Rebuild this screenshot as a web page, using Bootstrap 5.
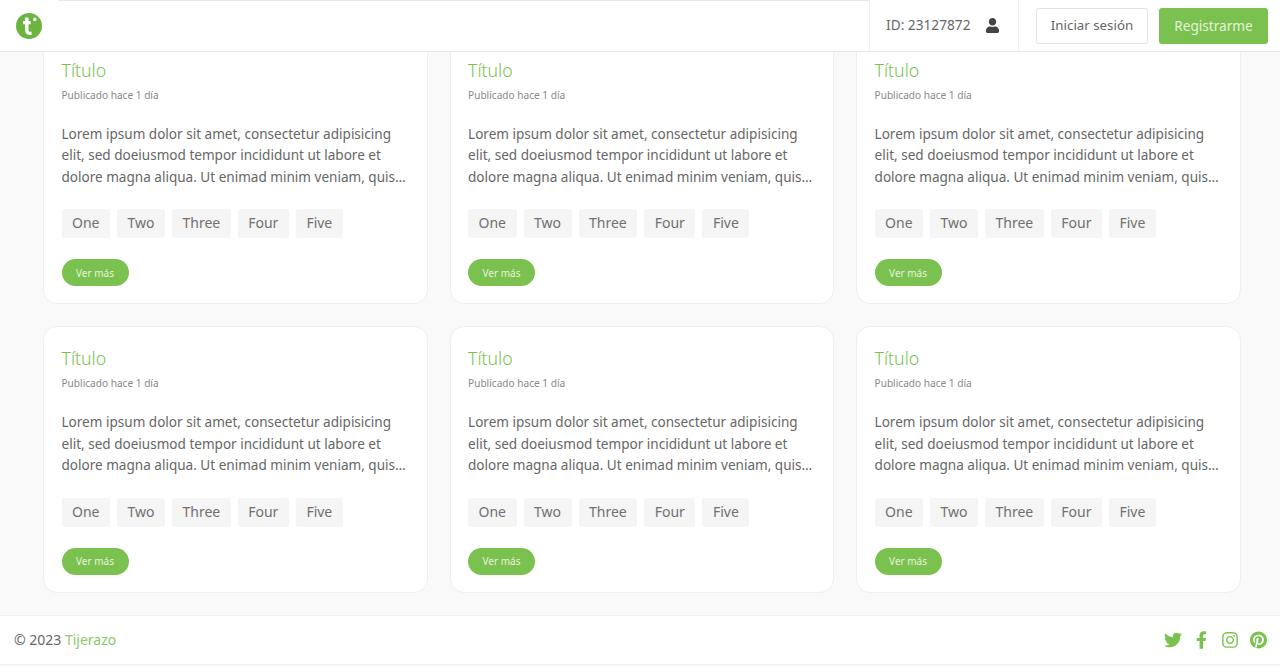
<!DOCTYPE html>
<html lang="es">
<head>
    <meta charset="UTF-8">
    <meta name="viewport" content="width=device-width, initial-scale=1.0">
    <title>Tijerazo</title>
    <link rel="stylesheet" href="https://cdn.jsdelivr.net/npm/bootstrap@5.3.0/dist/css/bootstrap.min.css">
    <style>
        body { background: #f9f9f9; color: #666; font-family: "Noto Sans", "Liberation Sans", sans-serif; font-size: 14px; overflow: hidden; }
        .top-bar { height: 52px; background: #fff; border-bottom: 1px solid #e8e8e8; padding: 0; }
        .logo-cell { width: 58px; height: 51px; }
        .top-fill { border-top: 1px solid #e8e8e8; height: 51px; }
        .id-cell { width: 150px; height: 51px; padding-left: 16px; gap: 15px; border-left: 1px solid #f0f0f0; border-right: 1px solid #f0f0f0; color: #666; font-size: 13.7px; }
        .top-actions { height: 51px; gap: 11px; padding: 0 12px 0 17px; }
        .btn-login { width: 112px; height: 36px; font-size: 13.3px; color: #666; background: #fff; border: 1px solid #e2e2e2; border-radius: 3px; padding: 1px 0 0; }
        .btn-signup { width: 109px; height: 36px; font-size: 13.6px; color: #e6f4dc; background: #7ac14f; border: 0; border-radius: 3px; padding: 1px 0 0; }
        .page-main { padding: 37.7px 39.4px 0 43px; }
        .post-grid { --bs-gutter-x: 22px; --bs-gutter-y: 22px; }
        .post-card { height: 266.6px; border: 1px solid #efefef; border-radius: 14px; padding: 17px 17.5px 0; background: #fff; }
        .post-title { font-size: 17.7px; line-height: 28px; color: #7ac14f; font-weight: 300; margin: 0; }
        .post-date { font-size: 10.1px; line-height: 14px; color: #888; margin: 4px 0 0; }
        .post-text { font-size: 13.55px; line-height: 21.5px; color: #666; margin: 22px 0 0; }
        .tag-row { margin-top: 21px; gap: 7px; }
        .tag-item { height: 29px; line-height: 28px; padding: 0 10.5px; background: #f5f5f5; border-radius: 3px; font-size: 14px; color: #707070; }
        .btn-more { display: block; width: 67px; height: 27px; margin-top: 21px; padding: 1px 0 0; border: 0; border-radius: 14px; font-size: 10px; color: #e6f4dc; background: #7ac14f; }
        .page-foot { height: 50px; margin-top: 22px; padding: 0 13px 0 14px; background: #fff; border-top: 1px solid #efefef; border-bottom: 1px solid #efefef; color: #666; font-size: 14px; }
        .page-foot a { color: #8cc96a; text-decoration: none; }
        .foot-icon { fill: #7ac14f; display: block; }
        .gap-f { margin-left: 14px; }
        .gap-i { margin-left: 15px; }
        .gap-p { margin-left: 12px; }
    </style>
</head>
<body>
    <nav class="top-bar fixed-top d-flex align-items-start">
        <div class="logo-cell d-flex align-items-center justify-content-center">
            <svg width="28" height="28" viewBox="0 0 28 28" aria-label="Tijerazo">
                <circle cx="14" cy="14" r="13" fill="#6db33f"/>
                <path d="M11.8 5.5v12.5c0 2.8 1.6 3.8 4.8 3.2M8 10.6h7.6" fill="none" stroke="#fff" stroke-width="3.4"/>
                <circle cx="19.8" cy="7.4" r="1.8" fill="#fff"/>
            </svg>
        </div>
        <div class="top-fill flex-grow-1"></div>
        <div class="id-cell d-flex align-items-center">
            <span>ID: 23127872</span>
            <svg width="13" height="15" viewBox="0 0 448 512" fill="#444"><path d="M224 256c70.7 0 128-57.3 128-128S294.7 0 224 0 96 57.3 96 128s57.3 128 128 128zm89.6 32h-16.7c-22.2 10.2-46.9 16-72.9 16s-50.6-5.8-72.9-16h-16.7C60.2 288 0 348.2 0 422.4V464c0 26.5 21.5 48 48 48h352c26.5 0 48-21.5 48-48v-41.6c0-74.2-60.2-134.4-134.4-134.4z"/></svg>
        </div>
        <div class="d-flex align-items-center top-actions">
            <button class="btn-login">Iniciar sesión</button>
            <button class="btn-signup">Registrarme</button>
        </div>
    </nav>

    <main class="page-main">
        <div id="posts" class="row row-cols-3 post-grid"></div>
    </main>

    <footer class="page-foot d-flex align-items-center justify-content-between">
        <span>© 2023 <a href="#">Tijerazo</a></span>
        <div class="d-flex align-items-center foot-icons">
            <svg class="foot-icon" width="18" height="18" viewBox="0 0 512 512"><path d="M459.37 151.716c.325 4.548.325 9.097.325 13.645 0 138.72-105.583 298.558-298.558 298.558-59.452 0-114.68-17.219-161.137-47.106 8.447.974 16.568 1.299 25.34 1.299 49.055 0 94.213-16.568 130.274-44.832-46.132-.975-84.792-31.188-98.112-72.772 6.498.974 12.995 1.624 19.818 1.624 9.421 0 18.843-1.3 27.614-3.573-48.081-9.747-84.143-51.98-84.143-102.985v-1.299c13.969 7.797 30.214 12.67 47.431 13.319-28.264-18.843-46.781-51.005-46.781-87.391 0-19.492 5.197-37.36 14.294-52.954 51.655 63.675 129.3 105.258 216.365 109.807-1.624-7.797-2.599-15.918-2.599-24.04 0-57.828 46.782-104.934 104.934-104.934 30.213 0 57.502 12.67 76.67 33.137 23.715-4.548 46.456-13.32 66.599-25.34-7.798 24.366-24.366 44.833-46.132 57.827 21.117-2.273 41.584-8.122 60.426-16.243-14.292 20.791-32.161 39.308-52.628 54.253z"/></svg>
            <svg class="foot-icon gap-f" width="11" height="18" viewBox="0 0 320 512"><path d="M279.14 288l14.22-92.66h-88.91v-60.13c0-25.35 12.42-50.06 52.24-50.06h40.42V6.26S260.43 0 225.36 0c-73.22 0-121.08 44.38-121.08 124.72v70.62H22.89V288h81.39v224h100.17V288z"/></svg>
            <svg class="foot-icon gap-i" width="16" height="18" viewBox="0 0 448 512"><path d="M224.1 141c-63.6 0-114.9 51.3-114.9 114.9s51.3 114.9 114.9 114.9S339 319.5 339 255.9 287.7 141 224.1 141zm0 189.6c-41.1 0-74.7-33.5-74.7-74.7s33.5-74.7 74.7-74.7 74.7 33.5 74.7 74.7-33.6 74.7-74.7 74.7zm146.4-194.3c0 14.9-12 26.8-26.8 26.8-14.9 0-26.8-12-26.8-26.8s12-26.8 26.8-26.8 26.8 12 26.8 26.8zm76.1 27.2c-1.7-35.9-9.9-67.7-36.2-93.9-26.2-26.2-58-34.4-93.9-36.2-37-2.1-147.9-2.1-184.9 0-35.8 1.7-67.6 9.9-93.9 36.1s-34.4 58-36.2 93.9c-2.1 37-2.1 147.9 0 184.9 1.7 35.9 9.9 67.7 36.2 93.9s58 34.4 93.9 36.2c37 2.1 147.9 2.1 184.9 0 35.9-1.7 67.7-9.9 93.9-36.2 26.2-26.2 34.4-58 36.2-93.9 2.1-37 2.1-147.8 0-184.8zM398.8 388c-7.8 19.6-22.9 34.7-42.6 42.6-29.5 11.7-99.5 9-132.1 9s-102.7 2.6-132.1-9c-19.6-7.8-34.7-22.9-42.6-42.6-11.7-29.5-9-99.5-9-132.1s-2.6-102.7 9-132.1c7.8-19.6 22.9-34.7 42.6-42.6 29.5-11.7 99.5-9 132.1-9s102.7-2.6 132.1 9c19.6 7.8 34.7 22.9 42.6 42.6 11.7 29.5 9 99.5 9 132.1s2.7 102.7-9 132.1z"/></svg>
            <svg class="foot-icon gap-p" width="17" height="18" viewBox="0 0 496 512"><path d="M496 256c0 137-111 248-248 248-25.6 0-50.2-3.9-73.4-11.1 10.1-16.5 25.2-43.5 30.8-65 3-11.6 15.4-59 15.4-59 8.1 15.4 31.7 28.5 56.8 28.5 74.8 0 128.7-68.8 128.7-154.3 0-81.9-66.9-143.2-152.9-143.2-107 0-163.9 71.8-163.9 150.1 0 36.4 19.4 81.7 50.3 96.1 4.7 2.2 7.2 1.2 8.3-3.3.8-3.4 5-20.3 6.9-28.1.6-2.5.3-4.7-1.7-7.1-10.1-12.5-18.3-35.3-18.3-56.6 0-54.7 41.4-107.6 112-107.6 60.9 0 103.6 41.5 103.6 100.9 0 67.1-33.9 113.6-78 113.6-24.3 0-42.6-20.1-36.7-44.8 7-29.5 20.5-61.3 20.5-82.6 0-19-10.2-34.9-31.4-34.9-24.9 0-44.9 25.7-44.9 60.2 0 22 7.4 36.8 7.4 36.8s-24.5 103.8-29 123.2c-5 21.4-3 51.6-.9 71.2C65.4 450.9 0 361.1 0 256 0 119 111 8 248 8s248 111 248 248z"/></svg>
        </div>
    </footer>

    <script src="https://cdn.jsdelivr.net/npm/bootstrap@5.3.0/dist/js/bootstrap.bundle.min.js"></script>
    <script>
        const tags = ['One', 'Two', 'Three', 'Four', 'Five'];
        const card = `
            <div class="col">
                <div class="post-card">
                    <h5 class="post-title">Título</h5>
                    <p class="post-date">Publicado hace 1 día</p>
                    <p class="post-text">Lorem ipsum dolor sit amet, consectetur adipisicing elit, sed doeiusmod tempor incididunt ut labore et dolore magna aliqua. Ut enimad minim veniam, quis…</p>
                    <div class="d-flex tag-row">${tags.map(t => `<span class="tag-item">${t}</span>`).join('')}</div>
                    <button class="btn-more">Ver más</button>
                </div>
            </div>`;
        document.getElementById('posts').innerHTML = card.repeat(6);
    </script>
</body>
</html>
